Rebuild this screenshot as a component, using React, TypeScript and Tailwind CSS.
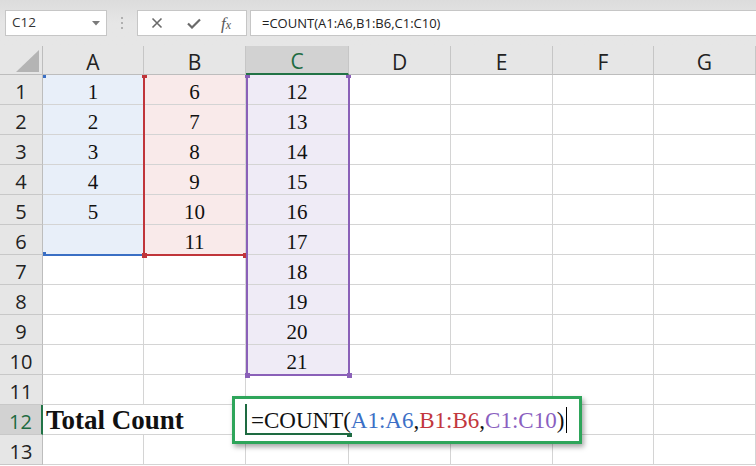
import React from "react";

const COLS = ["A", "B", "C", "D", "E", "F", "G"];

const A_VALS: Record<number, string> = { 1: "1", 2: "2", 3: "3", 4: "4", 5: "5" };
const B_VALS: Record<number, string> = { 1: "6", 2: "7", 3: "8", 4: "9", 5: "10", 6: "11" };
const C_VALS: Record<number, string> = {
  1: "12", 2: "13", 3: "14", 4: "15", 5: "16", 6: "17", 7: "18", 8: "19", 9: "20", 10: "21",
};

const GRID =
  "grid grid-cols-[43px_101px_102px_103px_102px_102px_101px_1fr] grid-rows-[29px_repeat(13,30px)]";

function cellBg(col: number, row: number): string {
  if (col === 0 && row <= 6) return "bg-[#e8eff9]";
  if (col === 1 && row <= 6) return "bg-[#f9eaea]";
  if (col === 2 && row <= 10) return "bg-[#efebf6]";
  return "bg-white";
}

function borderCls(col: number, row: number): string {
  let noR = false;
  let noB = false;
  if (row === 12 && col === 0) noR = true;
  if (row === 11 && (col === 2 || col === 3)) {
    noR = true;
    noB = true;
  }
  if (row === 11 && col === 4) noB = true;
  if (row === 12 && (col === 2 || col === 3)) noR = true;
  if (noR && noB) return "";
  if (noR) return "border-b";
  if (noB) return "border-r";
  return "border-r border-b";
}

function cellText(col: number, row: number): string {
  if (col === 0) return A_VALS[row] ?? "";
  if (col === 1) return B_VALS[row] ?? "";
  if (col === 2) return C_VALS[row] ?? "";
  return "";
}

function Toolbar() {
  return (
    <div className="h-[46px] flex items-start pt-[10px] pl-[5px] bg-gradient-to-b from-[#dcdcdc] via-[#e6e6e6] to-[#e6e6e6]">
      <div className="w-[102px] h-[26px] bg-white border border-[#c6c6c6] flex items-center justify-between pl-[6px] pr-[6px]">
        <span className="text-[13.5px] text-[#333] font-['Open_Sans',sans-serif] leading-none">C12</span>
        <svg width="8" height="5" viewBox="0 0 8 5">
          <polygon points="0,0 8,0 4,4.5" fill="#7a7a7a" />
        </svg>
      </div>
      <div className="w-[30px] h-[26px] flex flex-col items-center justify-center gap-[3px]">
        <div className="w-[2px] h-[2px] bg-[#b0b0b0]" />
        <div className="w-[2px] h-[2px] bg-[#b0b0b0]" />
        <div className="w-[2px] h-[2px] bg-[#b0b0b0]" />
      </div>
      <div className="w-[110px] h-[26px] bg-white border border-[#c6c6c6] flex items-center pl-[13px]">
        <svg width="12" height="12" viewBox="0 0 12 12" className="mr-[24px]">
          <path d="M1.5 1.5 L10.5 10.5 M10.5 1.5 L1.5 10.5" stroke="#6a6a6a" strokeWidth="1.6" fill="none" />
        </svg>
        <svg width="14" height="11" viewBox="0 0 14 11" className="mr-[20px]">
          <path d="M1 5.5 L5 9.5 L13 1.5" stroke="#6a6a6a" strokeWidth="2.2" fill="none" />
        </svg>
        <span className="font-['Liberation_Serif',serif] italic text-[17px] leading-none text-[#5a5a5a]">
          f<span className="text-[12px]">x</span>
        </span>
      </div>
      <div className="flex-1 -mr-[2px] ml-[3px] h-[26px] bg-white border border-[#c6c6c6] flex items-center pl-[11px]">
        <span className="text-[13px] text-[#222] font-['Open_Sans',sans-serif] leading-none">
          =COUNT(A1:A6,B1:B6,C1:C10)
        </span>
      </div>
    </div>
  );
}

function Cells() {
  const cells: React.ReactNode[] = [];
  cells.push(
    <div key="corner" className="bg-[#e6e6e6] border-r border-b border-[#bdbdbd] flex items-end justify-end pr-[3px] pb-[2px]">
      <svg width="23" height="22" viewBox="0 0 23 22">
        <polygon points="0,22 23,22 23,0" fill="#b4b4b4" />
      </svg>
    </div>
  );
  COLS.forEach((c, i) => {
    const sel = i === 2;
    cells.push(
      <div
        key={"h" + c}
        className={
          sel
            ? "bg-[#d2d2d2] border-r border-[#c6c6c6] border-b-2 border-b-[#217346] flex items-center justify-center pt-[4px] text-[21px] leading-none text-[#1e6b41] font-['Open_Sans',sans-serif]"
            : "bg-[#e6e6e6] border-r border-[#c6c6c6] border-b border-b-[#bdbdbd] flex items-center justify-center pt-[4px] text-[21px] leading-none text-[#222] font-['Open_Sans',sans-serif]"
        }
      >
        {c}
      </div>
    );
  });

  for (let r = 1; r <= 13; r++) {
    const sel = r === 12;
    cells.push(
      <div
        key={"r" + r}
        className={
          sel
            ? "bg-[#d2d2d2] border-r-2 border-r-[#217346] border-b border-b-[#c8c8c8] flex items-center justify-center pt-[5px] text-[20px] leading-none text-[#1e6b41] font-['Open_Sans',sans-serif]"
            : "bg-[#e6e6e6] border-r border-r-[#bdbdbd] border-b border-b-[#c8c8c8] flex items-center justify-center pt-[5px] text-[20px] leading-none text-[#222] font-['Open_Sans',sans-serif]"
        }
      >
        {r}
      </div>
    );
    for (let c = 0; c < 7; c++) {
      if (r === 12 && c === 0) {
        cells.push(
          <div
            key={"c" + r + "-" + c}
            className="bg-white border-b border-[#d4d4d4] flex items-end justify-start pl-[3px] overflow-visible whitespace-nowrap relative z-[1]"
          >
            <span className="font-['Liberation_Serif',serif] font-bold text-[27px] leading-none text-[#111]">
              Total Count
            </span>
          </div>
        );
        continue;
      }
      cells.push(
        <div
          key={"c" + r + "-" + c}
          className={`${cellBg(c, r)} ${borderCls(c, r)} border-[#d4d4d4] flex items-end justify-center pb-[1px]`}
        >
          <span className="font-['Liberation_Serif',serif] text-[21px] leading-none text-[#111] [font-variant-numeric:oldstyle-nums]">
            {cellText(c, r)}
          </span>
        </div>
      );
    }
  }
  return <div className={GRID}>{cells}</div>;
}

function RangeOverlays() {
  return (
    <div className={`absolute inset-0 pointer-events-none ${GRID}`}>
      {/* A1:A6 blue */}
      <div className="col-start-2 row-start-2 row-span-6 -mb-px relative border-b-2 border-[#3a6fc4]">
        <span className="absolute left-0 top-0 w-[3px] h-[3px] bg-[#3a6fc4]" />
        <span className="absolute left-0 -bottom-[2px] w-[3px] h-[4px] bg-[#3a6fc4]" />
      </div>
      {/* B1:B6 red */}
      <div className="col-start-3 row-start-2 row-span-6 -ml-px -mb-px relative border-l-2 border-b-2 border-[#c0353a]">
        <span className="absolute -left-[3px] top-0 w-[5px] h-[3px] bg-[#c0353a]" />
        <span className="absolute -left-[3.5px] -bottom-[3.5px] w-[5px] h-[5px] bg-[#c0353a]" />
        <span className="absolute -right-[2px] -bottom-[3.5px] w-[5px] h-[5px] bg-[#c0353a]" />
      </div>
      {/* C1:C10 purple */}
      <div className="col-start-4 row-start-2 row-span-10 -mr-px -mb-px relative border-l-2 border-r-2 border-b-2 border-[#8a60b8]">
        <span className="absolute -left-[3px] top-0 w-[5px] h-[3px] bg-[#8a60b8]" />
        <span className="absolute -right-[3px] top-0 w-[5px] h-[3px] bg-[#8a60b8]" />
        <span className="absolute -left-[3.5px] -bottom-[3.5px] w-[5px] h-[5px] bg-[#8a60b8]" />
        <span className="absolute -right-[3.5px] -bottom-[3.5px] w-[5px] h-[5px] bg-[#8a60b8]" />
      </div>
      {/* Edit box anchored at C12 */}
      <div className="col-start-4 row-start-13 relative">
        <div className="absolute -left-[14px] -top-[9px] w-[350px] h-[48px] border-[3px] border-[#2ea55a] bg-white shadow-[2px_3px_5px_rgba(0,0,0,0.35)] pl-[10px] pt-[5px]">
          <div className="relative w-[104px] h-[31px] border-l-2 border-b-2 border-[#1e6b41] pl-[4px] pt-[5px]">
            <span className="absolute -right-[3px] -bottom-[4px] w-[5px] h-[4px] bg-[#1e6b41]" />
            <div className="flex items-start whitespace-nowrap font-['Liberation_Serif',serif] text-[23px] leading-none text-[#111]">
              <span className="shrink-0">=COUNT(</span>
              <span className="shrink-0 text-[#3b6fc6]">A1:A6</span>
              <span className="shrink-0">,</span>
              <span className="shrink-0 text-[#c2373d]">B1:B6</span>
              <span className="shrink-0">,</span>
              <span className="shrink-0 text-[#8a5fbf]">C1:C10</span>
              <span className="shrink-0">)</span>
              <span className="shrink-0 ml-[2px] -mt-[2px] w-px h-[26px] bg-black" />
            </div>
          </div>
        </div>
      </div>
    </div>
  );
}

export default function App() {
  return (
    <div className="w-[756px] h-[466px] overflow-hidden bg-white">
      <Toolbar />
      <div className="relative">
        <Cells />
        <RangeOverlays />
      </div>
    </div>
  );
}
